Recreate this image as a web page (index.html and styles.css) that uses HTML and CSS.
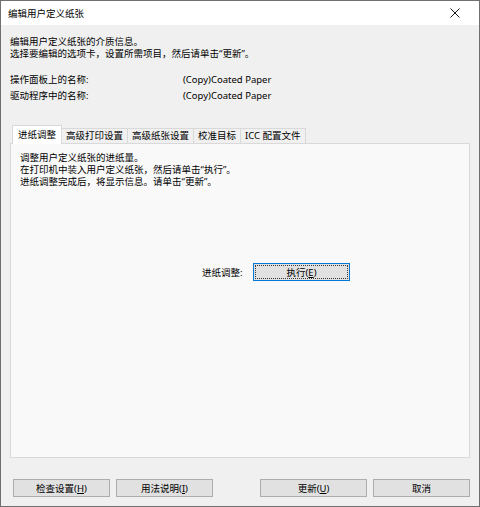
FILE: index.html
```html
<!DOCTYPE html>
<html lang="zh-CN">
<head>
<meta charset="utf-8">
<title>编辑用户定义纸张</title>
<link rel="stylesheet" href="styles.css">
</head>
<body>
<div class="window">
  <div class="titlebar">
    <span class="title">编辑用户定义纸张</span>
    <span class="close">
      <svg width="10" height="10" viewBox="0 0 10 10"><path d="M0.5 0.5 L9.5 9.5 M9.5 0.5 L0.5 9.5" stroke="#1a1a1a" stroke-width="1" fill="none"/></svg>
    </span>
  </div>
  <div class="content">
    <div class="intro">
      <div>编辑用户定义纸张的介质信息。</div>
      <div>选择要编辑的选项卡，设置所需项目，然后请单击“更新”。</div>
    </div>
    <div class="names">
      <span>操作面板上的名称:</span><span class="val">(Copy)Coated Paper</span>
      <span>驱动程序中的名称:</span><span class="val">(Copy)Coated Paper</span>
    </div>
    <div class="tabs">
      <div class="tab active">进纸调整</div>
      <div class="tab">高级打印设置</div>
      <div class="tab">高级纸张设置</div>
      <div class="tab">校准目标</div>
      <div class="tab">ICC 配置文件</div>
    </div>
    <div class="panel">
      <div class="panel-text">
        <div>调整用户定义纸张的进纸量。</div>
        <div>在打印机中装入用户定义纸张，然后请单击“执行”。</div>
        <div>进纸调整完成后，将显示信息。请单击“更新”。</div>
      </div>
      <div class="exec-row">
        <span class="exec-label">进纸调整:</span>
        <button class="btn btn-focus"><span class="focus-ring">执行(<u>E</u>)</span></button>
      </div>
    </div>
    <div class="footer">
      <div class="group">
        <button class="btn btn-foot">检查设置(<u>H</u>)</button>
        <button class="btn btn-foot">用法说明(<u>I</u>)</button>
      </div>
      <div class="group">
        <button class="btn btn-foot wide">更新(<u>U</u>)</button>
        <button class="btn btn-foot">取消</button>
      </div>
    </div>
  </div>
</div>
</body>
</html>
```
FILE: styles.css
```css
* { box-sizing: border-box; }
html, body { margin: 0; padding: 0; }
body {
  font-family: "Noto Sans", "Noto Sans CJK SC", sans-serif;
  font-size: 9.5px;
  color: #000;
  background: #fff;
}
.window {
  width: 480px;
  height: 507px;
  border: 1px solid #707070;
  display: flex;
  flex-direction: column;
  background: #f0f0f0;
}
.titlebar {
  height: 24px;
  background: #fff;
  display: flex;
  align-items: center;
  justify-content: space-between;
  padding: 0 19px 0 7px;
  flex: none;
}
.title { font-size: 9.5px; }
.close { display: flex; }
.content {
  flex: 1;
  display: flex;
  flex-direction: column;
  padding: 11px 9px 9px 9px;
}
.intro { line-height: 12px; }
.names {
  display: grid;
  grid-template-columns: 173px auto;
  line-height: 16px;
  margin-top: 12px;
}
.tabs {
  display: flex;
  align-items: flex-end;
  margin-top: 21px;
  padding-left: 2px;
  height: 18px;
}
.tab {
  height: 15px;
  line-height: 13px;
  padding: 0 4px;
  border: 1px solid #d9d9d9;
  border-bottom: none;
  background: #f0f0f0;
  margin-left: -1px;
}
.tab.active {
  line-height: 17px;
  background: #fff;
  margin-left: 0;
  padding: 0 5px;
  position: relative;
  z-index: 1;
  margin-bottom: -1px;
  height: 19px;
}
.panel {
  flex: 1;
  border: 1px solid #d9d9d9;
  background: #f9f9f9;
  padding: 8px 9px;
}
.panel-text { line-height: 12px; }
.exec-row {
  display: flex;
  align-items: center;
  margin-top: 75px;
  padding-left: 182px;
}
.exec-label { width: 51px; }
.btn {
  font-family: inherit;
  font-size: 9.5px;
  color: #000;
  background: #e1e1e1;
  border: 1px solid #adadad;
  height: 18px;
  width: 97px;
  padding: 0;
  margin: 0;
  display: flex;
  align-items: center;
  justify-content: center;
}
.btn-focus {
  border: 1px solid #0078d7;
  padding: 1px;
}
.focus-ring {
  width: 100%;
  height: 100%;
  border: 1px dotted #3a3a3a;
  display: flex;
  align-items: center;
  justify-content: center;
}
.footer {
  display: flex;
  justify-content: space-between;
  margin-top: 21px;
  padding-left: 3px;
}
.group { display: flex; gap: 6px; }
.btn-foot.wide { width: 107px; }
u { text-decoration-thickness: 1px; text-underline-offset: 1px; }
```
